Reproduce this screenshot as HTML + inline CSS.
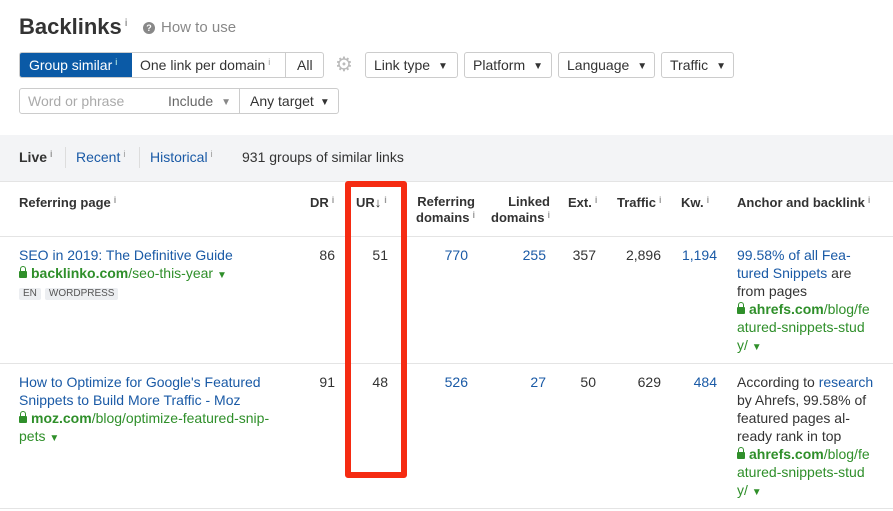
<!DOCTYPE html>
<html><head><meta charset="utf-8"><style>
*{margin:0;padding:0;box-sizing:border-box}
body{width:893px;height:511px;overflow:hidden;background:#fff;font-family:"Liberation Sans",Arial,sans-serif;font-size:14px;color:#333;position:relative}
.a{position:absolute;white-space:nowrap;line-height:18px}
.i{font-size:9px;color:#999;vertical-align:top;margin-left:3px;position:relative;top:-3px}
.b{color:#1a5aa6}
.g{color:#2f8f2a}
.gb{color:#2f8f2a;font-weight:bold}
.h{font-weight:bold;color:#333;font-size:13px}
.btn{position:absolute;border:1px solid #ccc;border-radius:3px;height:26px;line-height:24px;padding:0 8px;background:#fff;color:#333}
.tri{font-size:10px;margin-left:8px;vertical-align:1px}
.r{text-align:right}
.line{position:absolute;left:0;width:893px;height:1px;background:#e4e4e4}
.lock{display:inline-block;width:8px;height:7px;background:#2f8f2a;border-radius:1px;position:relative;margin-right:4px;vertical-align:0px}
.lock:before{content:"";position:absolute;left:1px;top:-5px;width:4px;height:5px;border:1.5px solid #2f8f2a;border-bottom:none;border-radius:3px 3px 0 0}
.tg{font-size:10px;color:#555;background:#eceef1;padding:0 4px;border-radius:2px;display:inline-block;line-height:12px;margin-right:4px}
.ar{font-size:10px;color:#2f8f2a}
</style></head><body>
<div class="a" style="left:19px;top:13px;font-size:22px;font-weight:bold;line-height:28px;color:#333">Backlinks<span class="i" style="font-size:10px">i</span></div>
<div class="a" style="left:143px;top:19px;color:#888;font-size:15px"><span style="display:inline-block;width:12px;height:12px;border-radius:6px;background:#888;color:#fff;font-size:9px;font-weight:bold;text-align:center;line-height:12px;vertical-align:1px;margin-right:6px">?</span>How to use</div>

<div style="position:absolute;left:19px;top:52px;width:305px;height:26px;border:1px solid #ccc;border-radius:3px;overflow:hidden">
<div class="a" style="left:0;top:0;width:112px;height:26px;background:#0b5aa6;color:#fff;line-height:24px;padding-left:9px">Group similar<span class="i" style="color:#cfe">i</span></div>
<div class="a" style="left:112px;top:0;width:154px;height:26px;line-height:24px;padding-left:8px;border-right:1px solid #ccc">One link per domain<span class="i">i</span></div>
<div class="a" style="left:277px;top:0;line-height:24px">All</div>
</div>
<div class="a" style="left:335px;top:55px;font-size:20px;color:#bbb;line-height:20px">⚙</div>
<div class="btn" style="left:365px;top:52px;width:93px">Link type<span class="tri">▼</span></div>
<div class="btn" style="left:464px;top:52px;width:88px">Platform<span class="tri">▼</span></div>
<div class="btn" style="left:558px;top:52px;width:97px">Language<span class="tri">▼</span></div>
<div class="btn" style="left:661px;top:52px;width:73px">Traffic<span class="tri">▼</span></div>

<div style="position:absolute;left:19px;top:88px;width:320px;height:26px;border:1px solid #ccc;border-radius:3px">
<div class="a" style="left:8px;top:3px;color:#aaa">Word or phrase</div>
<div class="a" style="left:148px;top:3px;color:#666">Include<span class="tri" style="color:#888">▼</span></div>
<div style="position:absolute;left:219px;top:0;width:1px;height:24px;background:#ccc"></div>
<div class="a" style="left:230px;top:3px">Any target<span class="tri" style="margin-left:6px">▼</span></div>
</div>

<div style="position:absolute;left:0;top:135px;width:893px;height:46px;background:#f3f4f6"></div>
<div class="a" style="left:19px;top:148px;font-weight:bold">Live<span class="i">i</span></div>
<div style="position:absolute;left:65px;top:147px;width:1px;height:21px;background:#ddd"></div>
<div class="a b" style="left:76px;top:148px">Recent<span class="i">i</span></div>
<div style="position:absolute;left:139px;top:147px;width:1px;height:21px;background:#ddd"></div>
<div class="a b" style="left:150px;top:148px">Historical<span class="i">i</span></div>
<div class="a" style="left:242px;top:148px">931 groups of similar links</div>

<div class="line" style="top:181px"></div>
<div class="a h" style="left:19px;top:194px">Referring page<span class="i">i</span></div>
<div class="a h" style="left:310px;top:194px">DR<span class="i">i</span></div>
<div class="a h" style="left:356px;top:194px">UR<span style="font-size:13px">↓</span><span class="i">i</span></div>
<div class="a h r" style="left:395px;top:194px;width:80px;line-height:16px">Referring<br>domains<span class="i">i</span></div>
<div class="a h r" style="left:470px;top:194px;width:80px;line-height:16px">Linked<br>domains<span class="i">i</span></div>
<div class="a h" style="left:568px;top:194px">Ext.<span class="i">i</span></div>
<div class="a h" style="left:617px;top:194px">Traffic<span class="i">i</span></div>
<div class="a h" style="left:681px;top:194px">Kw.<span class="i">i</span></div>
<div class="a h" style="left:737px;top:194px">Anchor and backlink<span class="i">i</span></div>
<div class="line" style="top:236px"></div>

<div class="a b" style="left:19px;top:246px">SEO in 2019: The Definitive Guide</div>
<div class="a" style="left:19px;top:264px"><span class="lock"></span><span class="gb">backlinko.com</span><span class="g">/seo-this-year</span> <span class="ar">▼</span></div>
<div class="a" style="left:19px;top:284px;line-height:14px"><span class="tg">EN</span><span class="tg">WORDPRESS</span></div>
<div class="a r" style="left:295px;top:246px;width:40px">86</div>
<div class="a r" style="left:348px;top:246px;width:40px">51</div>
<div class="a r b" style="left:418px;top:246px;width:50px">770</div>
<div class="a r b" style="left:496px;top:246px;width:50px">255</div>
<div class="a r" style="left:546px;top:246px;width:50px">357</div>
<div class="a r" style="left:601px;top:246px;width:60px">2,896</div>
<div class="a r b" style="left:657px;top:246px;width:60px">1,194</div>
<div class="a" style="left:737px;top:246px"><span class="b">99.58% of all Fea-<br>tured Snippets</span> are<br>from pages<br><span class="lock"></span><span class="gb">ahrefs.com</span><span class="g">/blog/fe<br>atured-snippets-stud<br>y/</span> <span class="ar">▼</span></div>
<div class="line" style="top:363px"></div>

<div class="a b" style="left:19px;top:373px">How to Optimize for Google's Featured<br>Snippets to Build More Traffic - Moz</div>
<div class="a" style="left:19px;top:409px"><span class="lock"></span><span class="gb">moz.com</span><span class="g">/blog/optimize-featured-snip-<br>pets</span> <span class="ar">▼</span></div>
<div class="a r" style="left:295px;top:373px;width:40px">91</div>
<div class="a r" style="left:348px;top:373px;width:40px">48</div>
<div class="a r b" style="left:418px;top:373px;width:50px">526</div>
<div class="a r b" style="left:496px;top:373px;width:50px">27</div>
<div class="a r" style="left:546px;top:373px;width:50px">50</div>
<div class="a r" style="left:601px;top:373px;width:60px">629</div>
<div class="a r b" style="left:657px;top:373px;width:60px">484</div>
<div class="a" style="left:737px;top:373px">According to <span class="b">research</span><br>by Ahrefs, 99.58% of<br>featured pages al-<br>ready rank in top<br><span class="lock"></span><span class="gb">ahrefs.com</span><span class="g">/blog/fe<br>atured-snippets-stud<br>y/</span> <span class="ar">▼</span></div>
<div class="line" style="top:508px"></div>

<div style="position:absolute;left:345px;top:181px;width:62px;height:297px;border:6px solid #f52b12;border-radius:3px"></div>
</body></html>
